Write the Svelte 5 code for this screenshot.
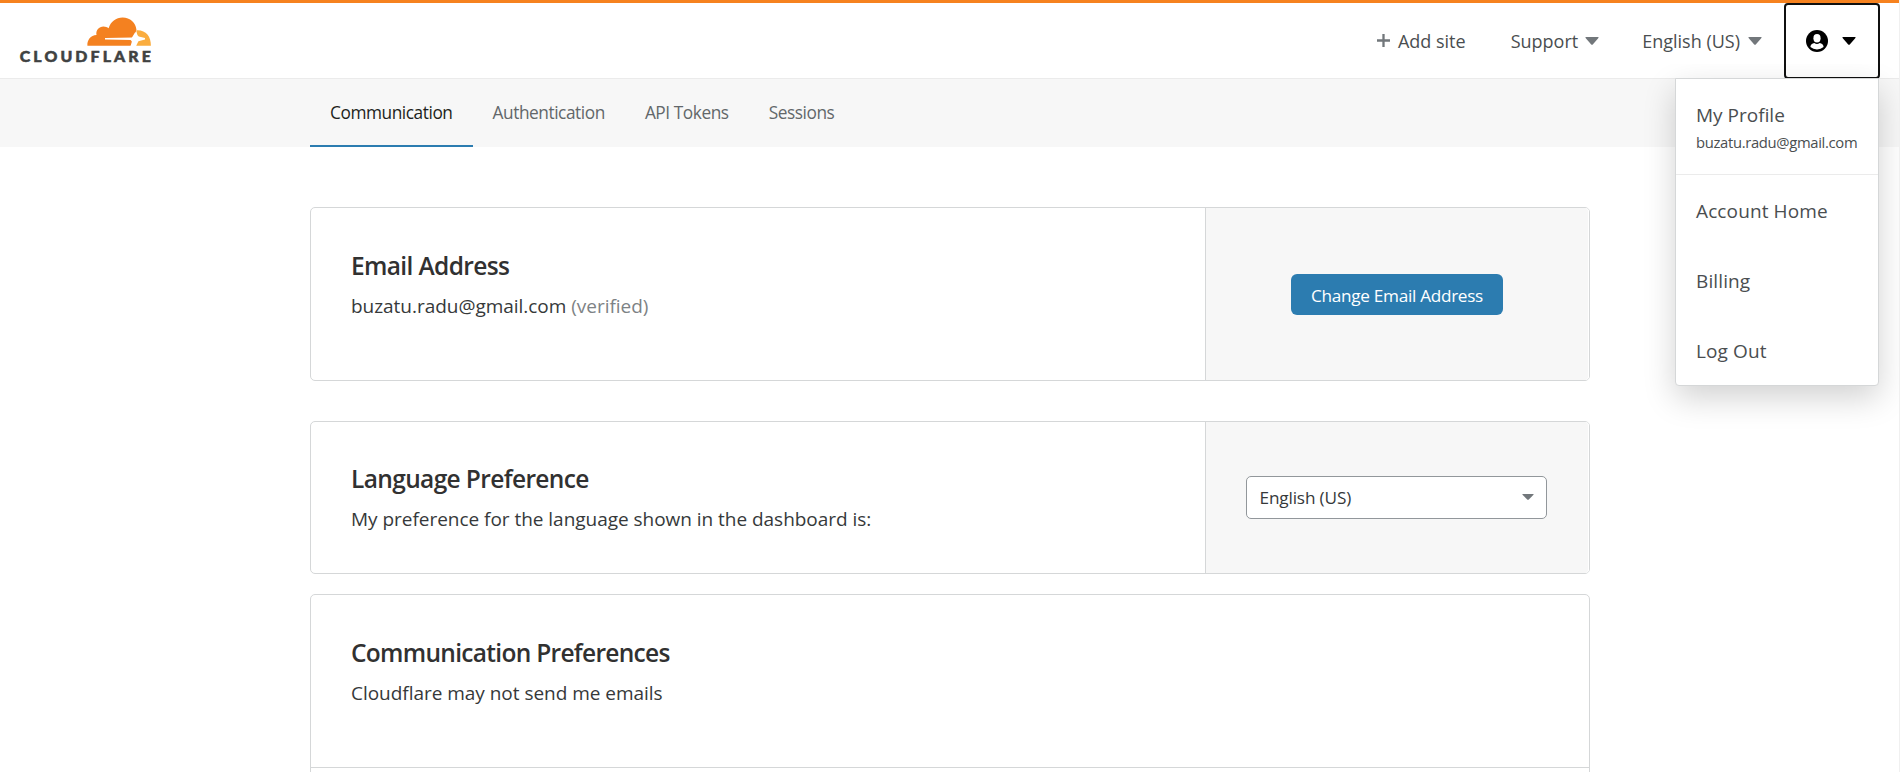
<script>
  const tabs = ['Communication', 'Authentication', 'API Tokens', 'Sessions'];
  const email = 'buzatu.radu@gmail.com';
  const links = ['Account Home', 'Billing', 'Log Out'];
  let active = $state('Communication');
</script>

{#snippet caret(w, h)}
  <svg class="caret" width={w} height={h} viewBox="0 0 14 8" preserveAspectRatio="none" aria-hidden="true">
    <path d="M1 0H13Q14 .2 13.4 1L8 7.2Q7 8.3 6 7.2L.6 1Q0 .2 1 0Z" fill="currentColor" />
  </svg>
{/snippet}

<div class="page">
  <header>
    <svg class="logo" width="136" height="50" viewBox="0 0 136 50" role="img" aria-label="Cloudflare">
      <path
        d="M69.4 31.7C69 26 72.6 21.3 78.5 21C77.5 16 81 12.4 85.5 12.4C87.6 12.4 89.3 13.1 90.6 14.2C92.6 7.6 98 3.4 104.6 3.4C112.2 3.4 117.7 8.4 118.4 15.4C118.4 18.8 117.6 21.2 114.4 23.5L87 24V25.4L112.5 25.9C114.2 26.4 114.4 28.4 112.7 31.7Z"
        fill="#f48120"
      />
      <path
        d="M118.6 16.2C127.5 15.6 133.2 22.2 132.9 31.7H118.2L120.4 27.2L127 25.4V24L120.8 22.4Q118.4 20.8 118.6 16.2Z"
        fill="#faad3f"
      />
      <path d="M117.6 17.5Q118.3 23.2 121.6 23.8L127 24.7L121.2 26Q118.6 26.6 115.4 31.7H112.6Q115.4 26.5 112.6 25.8Z" fill="#fff" />
      <text class="wordmark" transform="translate(1.8 47.9) scale(1.06 1)" textLength="123.6" lengthAdjust="spacing">CLOUDFLARE</text>
    </svg>
    <nav class="top">
      <a class="add" href="#add">
        <svg width="13" height="13" viewBox="0 0 13 13" aria-hidden="true"><path d="M6.5 0V13M0 6.5H13" stroke="#72777b" stroke-width="2.3" /></svg>
        <span>Add site</span>
      </a>
      <button class="support"><span>Support</span>{@render caret(14, 8)}</button>
      <button class="lang"><span>English (US)</span>{@render caret(14, 8)}</button>
      <div class="account">
        <button class="user" aria-label="Account">
          <svg width="22" height="22" viewBox="0 0 22 22" aria-hidden="true">
            <circle cx="11" cy="11" r="11" fill="#000" />
            <ellipse cx="11" cy="8.2" rx="3.6" ry="4.2" fill="#fff" />
            <path d="M4.4 17.1C4.4 14.3 6.2 13.3 8.3 12.9Q11 15.1 13.7 12.9C15.8 13.3 17.6 14.3 17.6 17.1Q14.8 19.4 11 19.4T4.4 17.1Z" fill="#fff" />
          </svg>
          {@render caret(14, 8)}
        </button>
        <div class="menu">
          <a class="profile" href="#profile">
            <span>My Profile</span>
            <small>{email}</small>
          </a>
          {#each links as l}
            <a class="entry" href="#menu">{l}</a>
          {/each}
        </div>
      </div>
    </nav>
  </header>

  <nav class="tabs">
    {#each tabs as t}
      <button class:active={t === active} onclick={() => (active = t)}>{t}</button>
    {/each}
  </nav>

  <main>
    <section class="card first">
      <div class="body">
        <h2>Email Address</h2>
        <p>{email} <span class="muted">(verified)</span></p>
      </div>
      <div class="side"><button class="primary">Change Email Address</button></div>
    </section>

    <section class="card second">
      <div class="body">
        <h2>Language Preference</h2>
        <p>My preference for the language shown in the dashboard is:</p>
      </div>
      <div class="side">
        <button class="select"><span>English (US)</span>{@render caret(12, 6)}</button>
      </div>
    </section>

    <section class="card third">
      <div class="body">
        <h2>Communication Preferences</h2>
        <p>Cloudflare may not send me emails</p>
      </div>
    </section>
  </main>
</div>

<style>
  :global(body) {
    margin: 0;
    background: #fff;
    overflow: hidden;
  }
  .page {
    box-sizing: border-box;
    width: 1900px;
    height: 772px;
    overflow: hidden;
    border-right: 1px solid #f0f0f0;
    font-family: 'Open Sans', 'Noto Sans', sans-serif;
    color: #36393a;
  }
  button {
    font: inherit;
    color: inherit;
    background: none;
    border: 0;
    padding: 0;
    margin: 0;
    text-align: left;
  }
  a {
    color: inherit;
    text-decoration: none;
  }
  .caret {
    flex: none;
  }
  header {
    box-sizing: border-box;
    height: 79px;
    border-top: 3px solid #f6821f;
    border-bottom: 1px solid #ebebeb;
    padding: 0 19px 0 18px;
    display: flex;
    justify-content: space-between;
    background: #fff;
  }
  .logo {
    display: block;
    margin-top: 11px;
  }
  .wordmark {
    font-family: Lato, sans-serif;
    font-weight: 900;
    font-size: 15px;
    fill: #404242;
    stroke: #404242;
    stroke-width: 0.5px;
  }
  .top {
    display: flex;
    font-size: 18px;
    line-height: 24px;
    color: #4a4e50;
  }
  .top > a,
  .top > button {
    display: flex;
    align-items: center;
    height: 75px;
    white-space: nowrap;
  }
  .top > button .caret {
    color: #72777b;
  }
  .add {
    gap: 8px;
    margin-right: 45px;
  }
  .support {
    gap: 7px;
    margin-right: 43px;
  }
  .lang {
    gap: 8px;
    margin-right: 22px;
  }
  .account {
    position: relative;
    z-index: 2;
  }
  .user {
    box-sizing: border-box;
    width: 96px;
    height: 76px;
    border: 2px solid #101010;
    border-radius: 4px;
    display: flex;
    align-items: center;
    gap: 14px;
    padding-left: 20px;
    color: #000;
  }
  .menu {
    position: absolute;
    right: 1px;
    top: 75px;
    box-sizing: border-box;
    width: 204px;
    height: 308px;
    background: #fff;
    border: 1px solid #d5d7d8;
    border-radius: 0 0 4px 4px;
    box-shadow: 0 12px 32px rgba(0, 0, 0, 0.18);
    clip-path: inset(-14px -20px -60px -60px);
    font-size: 19px;
    line-height: 26px;
    color: #4a4e50;
  }
  .profile {
    box-sizing: border-box;
    display: flex;
    flex-direction: column;
    height: 96px;
    padding: 23px 0 0 20px;
    border-bottom: 1px solid #ebebeb;
  }
  .profile small {
    font-size: 14.8px;
    line-height: 20px;
    margin-top: 4px;
    letter-spacing: -0.33px;
  }
  .entry {
    display: block;
    height: 70px;
    line-height: 72px;
    padding-left: 20px;
    letter-spacing: 0.12px;
  }
  .tabs {
    display: flex;
    height: 68px;
    padding-left: 310px;
    background: #f7f7f7;
  }
  .tabs button {
    box-sizing: border-box;
    height: 68px;
    padding: 2px 20px 0;
    font-size: 17.3px;
    letter-spacing: -0.44px;
    line-height: 24px;
    color: #62676a;
    border-bottom: 2px solid transparent;
  }
  .tabs .active {
    color: #1d1f20;
    border-bottom-color: #2c7cb0;
  }
  main {
    width: 1280px;
    margin: 60px 0 0 310px;
  }
  .card {
    box-sizing: border-box;
    display: flex;
    border: 1px solid #d5d7d8;
    border-radius: 5px;
    background: #fff;
  }
  .first {
    height: 174px;
    margin-bottom: 40px;
  }
  .second {
    height: 153px;
    margin-bottom: 20px;
  }
  .third {
    height: 200px;
  }
  .body {
    flex: 1;
    padding: 41px 0 0 40px;
  }
  .second .body {
    padding-top: 40px;
  }
  .third .body {
    box-sizing: border-box;
    height: 173px;
    border-bottom: 1px solid #d5d7d8;
  }
  h2 {
    margin: 0;
    font-size: 24.5px;
    line-height: 34px;
    font-weight: 600;
    letter-spacing: -0.63px;
    color: #313131;
  }
  .third h2 {
    letter-spacing: -0.7px;
  }
  p {
    margin: 7px 0 0;
    font-size: 19px;
    line-height: 32px;
    letter-spacing: -0.03px;
  }
  .muted {
    color: #7d8285;
  }
  .side {
    box-sizing: border-box;
    width: 384px;
    border-left: 1px solid #d5d7d8;
    border-right: 1px solid #fff;
    border-radius: 0 4px 4px 0;
    background: #f7f7f7;
    display: flex;
    align-items: center;
    justify-content: center;
  }
  .primary {
    width: 212px;
    height: 41px;
    padding-top: 2px;
    border-radius: 6px;
    background: #2c7cb0;
    color: #fff;
    font-size: 17.2px;
    letter-spacing: -0.3px;
    text-align: center;
    white-space: nowrap;
  }
  .select {
    box-sizing: border-box;
    width: 301px;
    height: 43px;
    margin-right: 2px;
    border: 1px solid #92979b;
    border-radius: 5px;
    background: #fff;
    padding: 0 12px 0 13px;
    display: flex;
    align-items: center;
    justify-content: space-between;
    font-size: 17.2px;
    letter-spacing: -0.15px;
  }
  .select .caret {
    color: #72777b;
    margin-top: -1px;
  }
</style>
